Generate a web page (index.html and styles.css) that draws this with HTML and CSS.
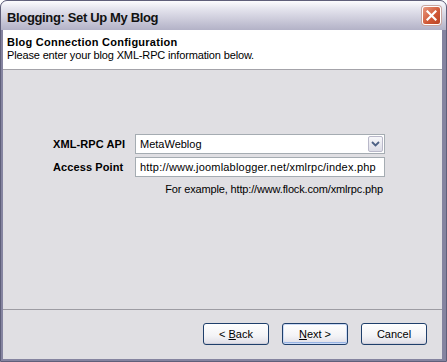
FILE: index.html
```html
<!DOCTYPE html>
<html lang="en">
<head>
    <meta charset="UTF-8">
    <title>Blogging: Set Up My Blog</title>
    <link rel="stylesheet" href="styles.css">
</head>
<body>
    <div class="window">
        <div class="titlebar">
            <span class="title">Blogging: Set Up My Blog</span>
            <span class="close">
                <svg width="11" height="11" viewBox="0 0 11 11">
                    <path d="M1.5 1.5 L9.5 9.5 M9.5 1.5 L1.5 9.5" stroke="#fff" stroke-width="2.2" stroke-linecap="square"/>
                </svg>
            </span>
        </div>
        <div class="frame">
            <div class="header">
                <div class="header-title">Blog Connection Configuration</div>
                <div class="header-text">Please enter your blog XML-RPC information below.</div>
            </div>
            <div class="content">
                <div class="form">
                    <label class="label">XML-RPC API</label>
                    <div class="select">
                        <span>MetaWeblog</span>
                        <span class="select-btn">
                            <svg width="9" height="6" viewBox="0 0 9 6">
                                <path d="M1 1 L4.5 4.5 L8 1" fill="none" stroke="#4d6185" stroke-width="1.8"/>
                            </svg>
                        </span>
                    </div>
                    <label class="label">Access Point</label>
                    <div class="input">http://www.joomlablogger.net/xmlrpc/index.php</div>
                    <div></div>
                    <div class="hint">For example, http://www.flock.com/xmlrpc.php</div>
                </div>
            </div>
            <div class="footer">
                <button class="button">&lt; <u>B</u>ack</button>
                <button class="button default"><u>N</u>ext &gt;</button>
                <button class="button">Cancel</button>
            </div>
        </div>
    </div>
</body>
</html>
```

FILE: styles.css
```css
body {
    margin: 0;
    background-color: #fff;
    font-family: 'Liberation Sans', Arial, sans-serif;
    font-size: 11px;
    color: #000;
}

.window {
    width: 447px;
    height: 362px;
    box-sizing: border-box;
    border: 1px solid #5f5f7a;
    border-radius: 7px 7px 0 0;
    display: flex;
    flex-direction: column;
    overflow: hidden;
    background-color: #8584a0;
}

.titlebar {
    height: 29px;
    flex: none;
    display: flex;
    align-items: center;
    justify-content: space-between;
    padding: 0 5px 0 6px;
    background: linear-gradient(#fcfcfe 0%, #e6e6ef 25%, #d2d1df 55%, #bdbccf 85%, #b3b2c7 100%);
}

.title {
    font-size: 13px;
    font-weight: bold;
    letter-spacing: -0.35px;
    color: #111;
    padding-top: 3px;
}

.close {
    width: 19px;
    height: 19px;
    box-sizing: border-box;
    border: 1px solid #fff;
    border-radius: 3px;
    background: linear-gradient(135deg, #e99a80, #cf5634 60%, #b94426);
    display: flex;
    align-items: center;
    justify-content: center;
    box-shadow: 0 0 0 1px #c9a6a0;
}

.frame {
    flex: 1;
    display: flex;
    flex-direction: column;
    border: solid #8584a0;
    border-width: 0 4px 2px 2px;
    background-color: #e0dfe3;
}

.header {
    height: 40px;
    box-sizing: border-box;
    padding: 6px 0 0 4px;
    background-color: #fff;
    border-bottom: 1px solid #a4a3a9;
    line-height: 13px;
}

.header-title {
    font-weight: bold;
    letter-spacing: 0.25px;
}

.header-text {
    letter-spacing: -0.15px;
}

.content {
    height: 239px;
    box-sizing: border-box;
    padding: 64px 0 0 50px;
}

.form {
    display: grid;
    grid-template-columns: 82px 250px;
    row-gap: 3px;
    align-items: center;
}

.label {
    font-weight: bold;
    letter-spacing: 0.1px;
}

.select,
.input {
    height: 20px;
    box-sizing: border-box;
    border: 1px solid #a5acb2;
    background-color: #fff;
    display: flex;
    align-items: center;
    padding-left: 4px;
}

.input {
    letter-spacing: 0.2px;
}

.select-btn {
    margin-left: auto;
    margin-right: 1px;
    width: 15px;
    height: 16px;
    box-sizing: border-box;
    border: 1px solid #b9b8c9;
    border-radius: 2px;
    background: linear-gradient(#f7f7fa, #dcdce6);
    display: flex;
    align-items: center;
    justify-content: center;
}

.hint {
    text-align: right;
    letter-spacing: -0.15px;
    padding: 3px 2px 0 0;
}

.footer {
    flex: 1;
    border-top: 1px solid #9d9ca3;
    display: flex;
    justify-content: flex-end;
    align-items: flex-start;
    gap: 13px;
    padding: 13px 15px 0 0;
}

.button {
    width: 66px;
    height: 22px;
    box-sizing: border-box;
    border: 1px solid #1f3f6b;
    border-radius: 3px;
    background: linear-gradient(#ffffff, #f3f3f6 60%, #dedde6);
    box-shadow: inset 0 -1px 0 #d0cfda;
    font-family: inherit;
    font-size: 11px;
    color: #000;
    padding: 0;
}

.button.default {
    box-shadow: inset 0 0 0 1px #cbdaf5, inset 0 -2px 0 #98b4e4;
}
```
